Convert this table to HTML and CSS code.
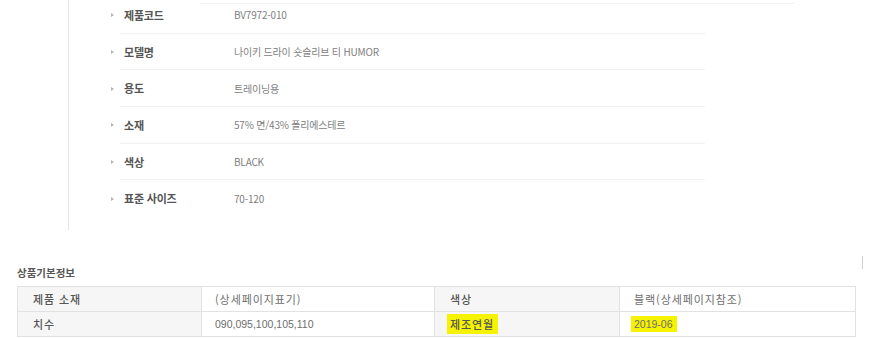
FILE: index.html
```html
<!DOCTYPE html>
<html lang="ko">
<head>
<meta charset="utf-8">
<link rel="stylesheet" href="styles.css">
</head>
<body>
<div class="top">
  <div class="topline"></div>
  <div class="box">
    <ul class="spec">
      <li class="row"><span class="bullet"></span><div class="cell"><span class="label">제품코드</span><span class="value">BV7972-010</span></div></li>
      <li class="row"><span class="bullet"></span><div class="cell"><span class="label">모델명</span><span class="value">나이키 드라이 숏슬리브 티 HUMOR</span></div></li>
      <li class="row"><span class="bullet"></span><div class="cell"><span class="label">용도</span><span class="value">트레이닝용</span></div></li>
      <li class="row"><span class="bullet"></span><div class="cell"><span class="label">소재</span><span class="value">57% 면/43% 폴리에스테르</span></div></li>
      <li class="row"><span class="bullet"></span><div class="cell"><span class="label">색상</span><span class="value">BLACK</span></div></li>
      <li class="row last"><span class="bullet"></span><div class="cell"><span class="label">표준 사이즈</span><span class="value">70-120</span></div></li>
    </ul>
  </div>
</div>
<div class="basic">
  <div class="head">
    <h3 class="title">상품기본정보</h3>
    <span class="tick"></span>
  </div>
  <table class="info">
    <colgroup>
      <col class="c1"><col class="c2"><col class="c3"><col class="c4">
    </colgroup>
    <tr>
      <th>제품 소재</th>
      <td>(상세페이지표기)</td>
      <th>색상</th>
      <td>블랙(상세페이지참조)</td>
    </tr>
    <tr>
      <th>치수</th>
      <td class="num">090,095,100,105,110</td>
      <th><span class="hl">제조연월</span></th>
      <td class="num"><span class="hl">2019-06</span></td>
    </tr>
  </table>
</div>
</body>
</html>
```

FILE: styles.css
```css
html, body {
  margin: 0;
  padding: 0;
  background: #fff;
}
body {
  width: 872px;
  height: 338px;
  overflow: hidden;
  font-family: "Noto Sans CJK KR", "Noto Sans", sans-serif;
}
.topline {
  height: 1px;
  margin: 3px 77px 0 200px;
  background: #f2f2f2;
}
.box {
  margin: -7px 0 0 68px;
  border-left: 1px solid #e6e6e6;
  height: 233px;
  box-sizing: border-box;
}
.spec {
  list-style: none;
  margin: 0;
  padding: 0 0 0 42px;
  width: 594px;
}
.row {
  display: flex;
  align-items: center;
  height: 36.7px;
}
.bullet {
  width: 0;
  height: 0;
  border-left: 3px solid #b5b5b5;
  border-top: 2px solid transparent;
  border-bottom: 2px solid transparent;
  margin-right: 6px;
}
.cell {
  flex: 1;
  display: flex;
  align-items: center;
  height: 35.7px;
  border-bottom: 1px solid #f1f1f1;
  padding-left: 4px;
  align-self: flex-start;
}
.last .cell {
  border-bottom-color: transparent;
}
.label {
  width: 110px;
  font-size: 11px;
  font-weight: 700;
  color: #555;
  letter-spacing: -0.2px;
}
.value {
  font-size: 10px;
  color: #808080;
  letter-spacing: -0.2px;
}
.basic {
  padding: 0 0 0 17px;
}
.head {
  display: flex;
  align-items: flex-start;
  height: 22px;
  margin-top: 34px;
}
.title {
  margin: 0;
  font-size: 10.5px;
  font-weight: 700;
  color: #555;
  line-height: 17px;
}
.tick {
  width: 1px;
  height: 13px;
  background: #d0d0d0;
  margin: -8px 9px 0 auto;
}
.info {
  border-collapse: collapse;
  width: 838px;
  table-layout: fixed;
}
.c1 { width: 184px; }
.c2 { width: 233px; }
.c3 { width: 185px; }
.c4 { width: 236px; }
.info th, .info td {
  border: 1px solid #e2e2e2;
  height: 24px;
  padding: 0 0 0 15px;
  text-align: left;
  font-size: 11px;
  letter-spacing: 0.9px;
  line-height: 16px;
}
.info th {
  background: #f6f6f6;
  color: #555;
  font-weight: 500;
}
.info td {
  color: #6e6e6e;
  font-weight: 400;
  padding-left: 13px;
}
.info td:last-child {
  padding-left: 14px;
}
.info td.num {
  font-family: "Liberation Sans", "Noto Sans CJK KR", sans-serif;
  font-size: 10.5px;
  letter-spacing: 0;
}
.hl {
  background: #f6f300;
  padding: 2px 4px 2px 3px;
  margin-left: -3px;
}
```
